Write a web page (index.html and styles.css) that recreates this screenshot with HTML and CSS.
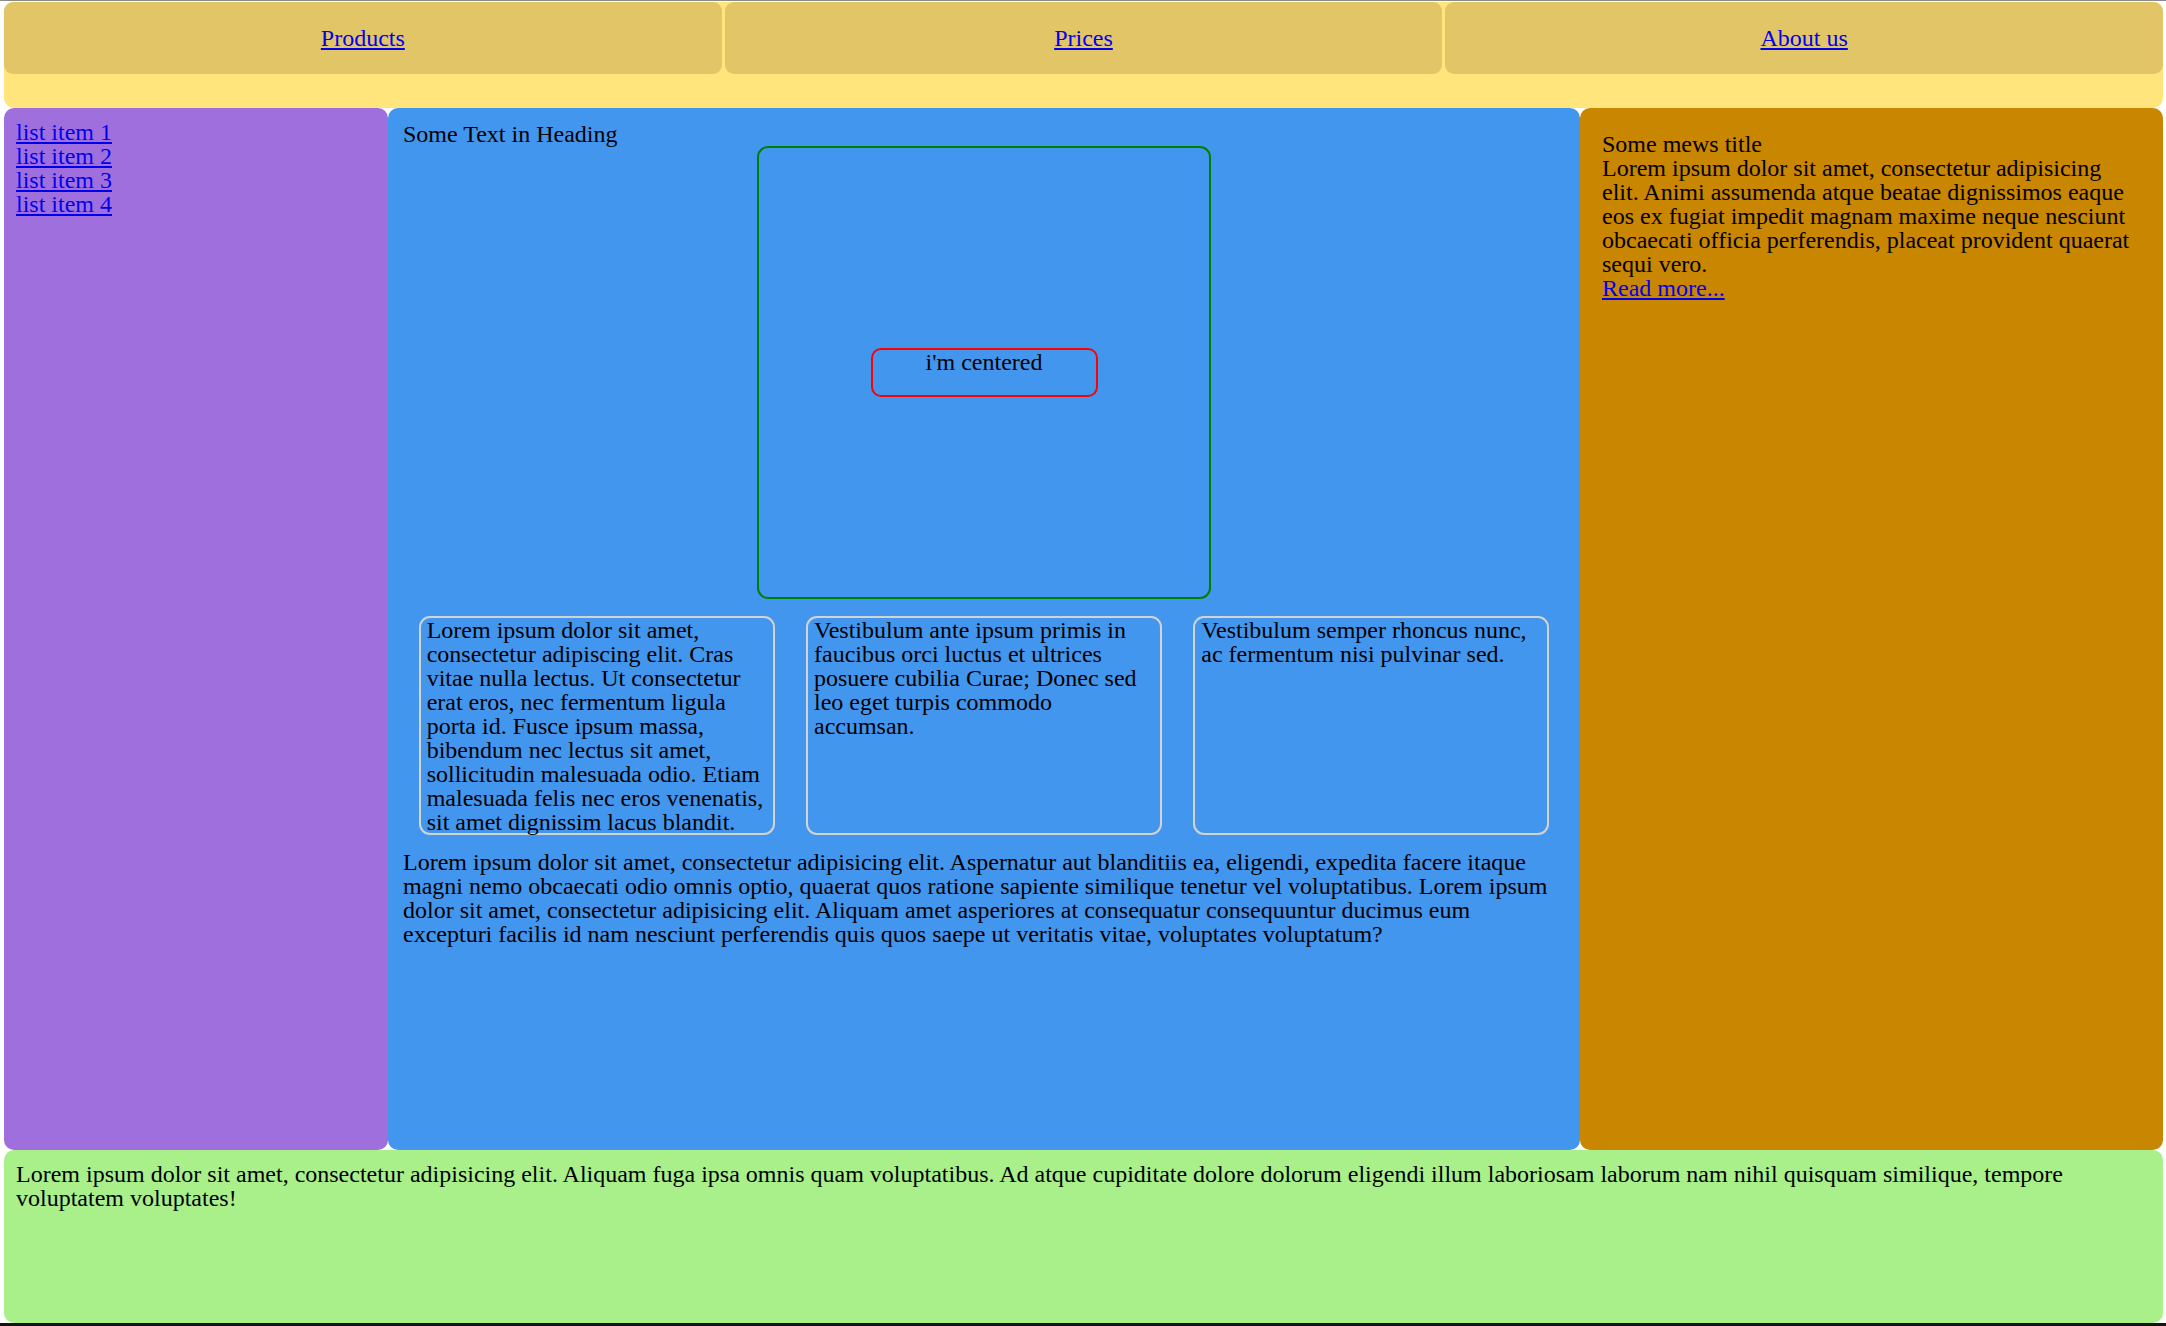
FILE: index.html
```html
<!DOCTYPE html>
<html lang="en">
<head>
<meta charset="utf-8">
<title>Layout</title>
<link rel="stylesheet" href="styles.css">
</head>
<body>
<div class="page">
  <header class="header">
    <nav class="nav">
      <div class="nav-item"><a href="#">Products</a></div>
      <div class="nav-item"><a href="#">Prices</a></div>
      <div class="nav-item"><a href="#">About us</a></div>
    </nav>
  </header>
  <aside class="sidebar">
    <ul class="side-list">
      <li><a href="#">list item 1</a></li>
      <li><a href="#">list item 2</a></li>
      <li><a href="#">list item 3</a></li>
      <li><a href="#">list item 4</a></li>
    </ul>
  </aside>
  <main class="content">
    <div class="heading">Some Text in Heading</div>
    <div class="outer-box">
      <div class="inner-box">i'm centered</div>
    </div>
    <div class="cards">
      <div class="card">Lorem ipsum dolor sit amet, consectetur adipiscing elit. Cras vitae nulla lectus. Ut consectetur erat eros, nec fermentum ligula porta id. Fusce ipsum massa, bibendum nec lectus sit amet, sollicitudin malesuada odio. Etiam malesuada felis nec eros venenatis, sit amet dignissim lacus blandit.</div>
      <div class="card">Vestibulum ante ipsum primis in faucibus orci luctus et ultrices posuere cubilia Curae; Donec sed leo eget turpis commodo accumsan.</div>
      <div class="card">Vestibulum semper rhoncus nunc, ac fermentum nisi pulvinar sed.</div>
    </div>
    <p class="text">Lorem ipsum dolor sit amet, consectetur adipisicing elit. Aspernatur aut blanditiis ea, eligendi, expedita facere itaque magni nemo obcaecati odio omnis optio, quaerat quos ratione sapiente similique tenetur vel voluptatibus. Lorem ipsum dolor sit amet, consectetur adipisicing elit. Aliquam amet asperiores at consequatur consequuntur ducimus eum excepturi facilis id nam nesciunt perferendis quis quos saepe ut veritatis vitae, voluptates voluptatum?</p>
  </main>
  <aside class="news">
    <div class="news-title">Some mews title</div>
    <div class="news-body">Lorem ipsum dolor sit amet, consectetur adipisicing elit. Animi assumenda atque beatae dignissimos eaque eos ex fugiat impedit magnam maxime neque nesciunt obcaecati officia perferendis, placeat provident quaerat sequi vero.</div>
    <a href="#">Read more...</a>
  </aside>
  <footer class="footer">Lorem ipsum dolor sit amet, consectetur adipisicing elit. Aliquam fuga ipsa omnis quam voluptatibus. Ad atque cupiditate dolore dolorum eligendi illum laboriosam laborum nam nihil quisquam similique, tempore voluptatem voluptates!</footer>
</div>
</body>
</html>
```
FILE: styles.css
```css
html {
  background: #ffffff;
}
body {
  margin: 0;
  height: 1322px;
  border-top: 1px solid #8a8a8a;
  border-bottom: 3px solid #141414;
  font-family: "Liberation Serif", "Times New Roman", serif;
  font-size: 24px;
  line-height: 24px;
  color: #000;
  overflow: hidden;
}
a {
  color: #0000ee;
  text-decoration: underline;
}
.page {
  box-sizing: border-box;
  height: 100%;
  padding: 1px 3px 0 4px;
  display: grid;
  grid-template-columns: 384px 1192px 1fr;
  grid-template-rows: 106px 1fr 173px;
}
.header {
  grid-column: 1 / 4;
  background: #ffe57b;
  border-radius: 10px;
}
.nav {
  display: grid;
  grid-template-columns: 1fr 1fr 1fr;
  gap: 3px;
  height: 72px;
}
.nav-item {
  background: #e2c566;
  border-radius: 9px;
  display: flex;
  align-items: center;
  justify-content: center;
}
.sidebar {
  background: #9f70dd;
  border-radius: 10px;
  padding: 12px 12px;
}
.side-list {
  list-style: none;
  margin: 0;
  padding: 0;
}
.content {
  background: #4396ee;
  border-radius: 10px;
  padding: 14px 15px;
}
.heading {
  height: 24px;
}
.outer-box {
  box-sizing: border-box;
  width: 454px;
  height: 453px;
  margin: 0 auto;
  border: 2px solid #008000;
  border-radius: 11px;
  display: flex;
  align-items: center;
  justify-content: center;
}
.inner-box {
  box-sizing: border-box;
  width: 227px;
  height: 49px;
  border: 2px solid #ff0000;
  border-radius: 10px;
  text-align: center;
}
.cards {
  display: grid;
  grid-template-columns: repeat(3, 356px);
  justify-content: space-around;
  margin-top: 17px;
}
.card {
  box-sizing: border-box;
  height: 219px;
  border: 2px solid #d3d3d3;
  border-radius: 11px;
  padding: 0 6px;
}
.text {
  margin: 15px 0 0;
}
.news {
  background: #c98600;
  border-radius: 10px;
  padding: 24px 22px;
}
.footer {
  grid-column: 1 / 4;
  background: #a9f08b;
  border-radius: 10px;
  padding: 12px 12px;
}
```
